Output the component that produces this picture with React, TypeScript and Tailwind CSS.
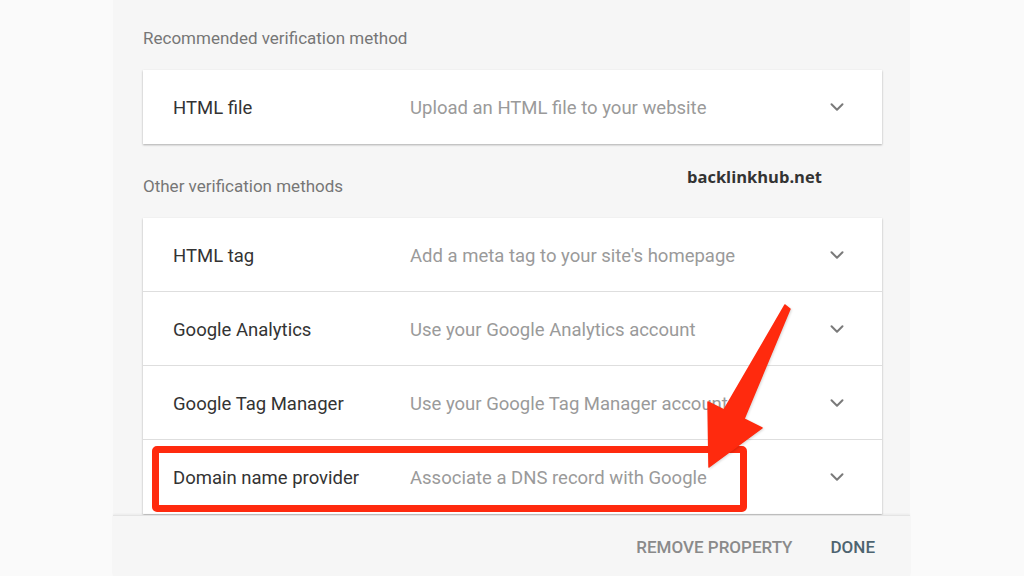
import { ChevronDown } from "lucide-react";

const otherMethods = [
  { name: "HTML tag", desc: "Add a meta tag to your site's homepage" },
  { name: "Google Analytics", desc: "Use your Google Analytics account" },
  { name: "Google Tag Manager", desc: "Use your Google Tag Manager account" },
  { name: "Domain name provider", desc: "Associate a DNS record with Google" },
];

function MethodRow({ name, desc, last }: { name: string; desc: string; last?: boolean }) {
  return (
    <div
      className={
        "flex items-center h-[74px] pl-[30px] pr-[34px] " +
        (last ? "" : "border-b border-[#dedede]")
      }
    >
      <div className="w-[237px] mt-[4px] text-[18.5px] text-[#333333]">{name}</div>
      <div className="flex-1 mt-[4px] text-[18.5px] text-[#9a9a9a]">{desc}</div>
      <ChevronDown className="w-[22px] h-[22px] text-[#7a7a7a]" strokeWidth={2.2} />
    </div>
  );
}

export default function App() {
  return (
    <div
      className="relative w-[1024px] h-[576px] overflow-hidden bg-[#fafafa] flex"
      style={{ fontFamily: "Roboto, 'Liberation Sans', sans-serif" }}
    >
      <div className="w-[113px]" />

      {/* dialog */}
      <div className="w-[797px] h-full flex flex-col bg-[#f6f6f6]">
        <div className="h-[515px] overflow-hidden pl-[30px] pr-[28px] pt-[27px]">
          <div className="text-[17px] text-[#767676] leading-[22px]">Recommended verification method</div>
          <div className="mt-[21px] bg-white shadow-[0_1px_2px_rgba(0,0,0,0.3)]">
            <MethodRow name="HTML file" desc="Upload an HTML file to your website" last />
          </div>

          <div className="mt-[31px] text-[17px] text-[#767676] leading-[22px]">Other verification methods</div>
          <div className="mt-[21px] bg-white shadow-[0_1px_2px_rgba(0,0,0,0.3)]">
            {otherMethods.map((m, i) => (
              <MethodRow key={m.name} name={m.name} desc={m.desc} last={i === otherMethods.length - 1} />
            ))}
          </div>
        </div>

        {/* footer */}
        <div className="flex-1 border-t border-[#e4e4e4] shadow-[0_-1px_2px_rgba(0,0,0,0.05)] flex items-center justify-end pr-[35px] pt-[4px] gap-[38px] text-[17px] font-medium">
          <span className="text-[#8a8a8a]">REMOVE PROPERTY</span>
          <span className="text-[#4d6470]">DONE</span>
        </div>
      </div>

      {/* watermark */}
      <div
        className="absolute left-[687px] top-[165px] text-[16.5px] font-bold text-[#333333]"
        style={{ fontFamily: "'Open Sans', sans-serif" }}
      >
        backlinkhub.net
      </div>

      {/* highlight box */}
      <div className="absolute left-[152px] top-[446px] w-[595px] h-[66px] border-[7px] border-[#ff2a0e] rounded-[5px]" />

      {/* arrow */}
      <svg className="absolute left-0 top-0" width="1024" height="576" viewBox="0 0 1024 576">
        <polygon
          points="785,305 790,309 744,419 762,428 709,467 708,402 724,410"
          fill="#ff2a0e"
          stroke="#ff2a0e"
          strokeWidth="1.5"
          strokeLinejoin="round"
          style={{ filter: "drop-shadow(1px 1px 1px rgba(0,0,0,0.15))" }}
        />
      </svg>
    </div>
  );
}
